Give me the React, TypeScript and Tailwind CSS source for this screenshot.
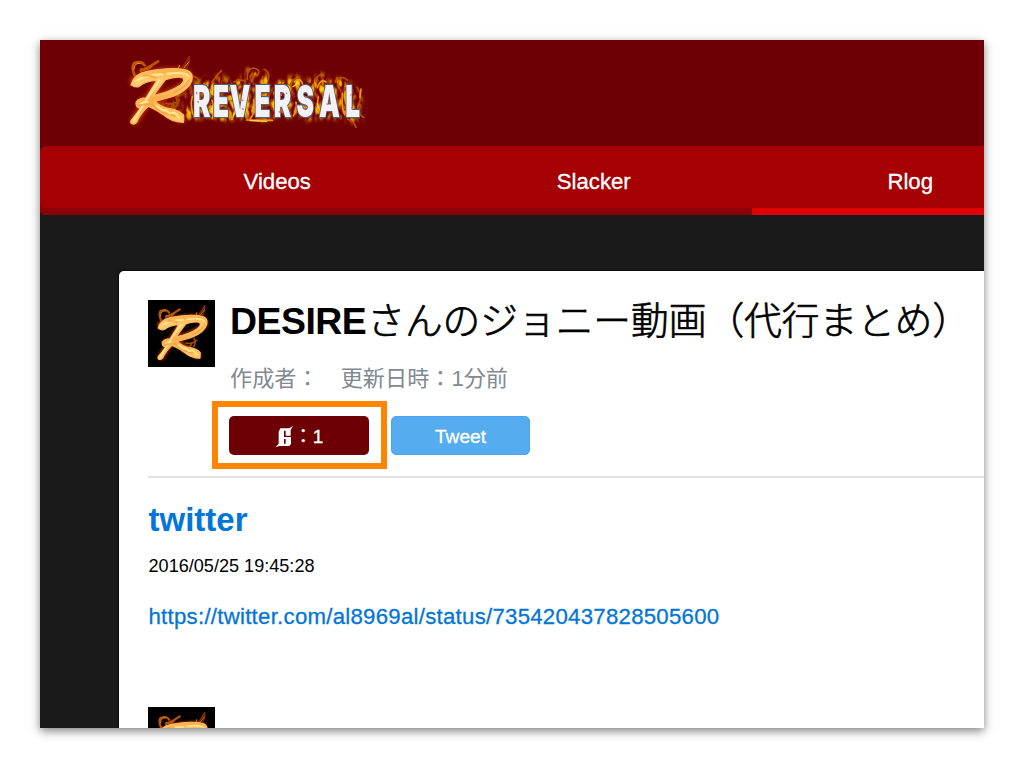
import React from 'react';

function Emblem({ id }: { id: string }) {
  return (
    <g strokeLinecap="round" strokeLinejoin="round" fill="none">
      <defs>
        <linearGradient id={`${id}-fire`} x1="0" y1="80" x2="0" y2="255" gradientUnits="userSpaceOnUse">
          <stop offset="0" stopColor="#ffa93a" />
          <stop offset="0.25" stopColor="#ffcf70" />
          <stop offset="0.55" stopColor="#ffad48" />
          <stop offset="1" stopColor="#ffcf70" />
        </linearGradient>
        <filter id={`${id}-glow`} x="-30%" y="-30%" width="160%" height="160%">
          <feGaussianBlur stdDeviation="6" />
        </filter>
        <filter id={`${id}-soft`} x="-20%" y="-20%" width="140%" height="140%">
          <feGaussianBlur stdDeviation="2" />
        </filter>
      </defs>
      <g filter={`url(#${id}-glow)`} stroke="#e04800" opacity="0.85">
        <path d="M72 122Q120 94 180 96Q242 92 236 120Q222 152 95 187" strokeWidth="24" />
        <path d="M155 112L74 242M128 188L212 236" strokeWidth="24" />
      </g>
      <g filter={`url(#${id}-soft)`}>
        <path d="M76 110Q62 82 72 70Q94 60 104 76M92 92Q120 82 144 64M94 88Q112 92 124 78" stroke="#bd5504" strokeWidth="8" />
        <path d="M172 92Q190 72 184 96M212 88Q230 66 238 50Q240 76 222 96" stroke="#8d2b02" strokeWidth="5" />
        <path d="M72 88Q72 68 90 70M208 76L204 92M222 84L236 66" stroke="#ff9918" strokeWidth="3" />
        <path d="M150 212Q150 228 168 220M168 190Q190 196 208 180M174 214L190 192M198 172Q206 190 196 204" stroke="#a94a05" strokeWidth="6" />
      </g>
      <path
        d="M63 134Q72 101 112 94Q195 79 231 91Q250 98 246 119Q238 150 188 169L134 184Q157 205 183 207Q207 211 221 226L220 247Q184 247 155 220Q132 205 115 199Q92 219 80 246Q72 256 63 249Q60 242 70 233L93 204Q77 205 78 187Q87 174 108 174L141 121Q105 123 88 139Q75 144 63 134ZM166 119L130 167Q180 157 209 137Q230 120 216 112Q192 109 166 119Z"
        fill={`url(#${id}-fire)`}
        fillRule="evenodd"
        stroke="#ffba68"
        strokeWidth="4"
      />
      <g filter={`url(#${id}-soft)`}>
        <path d="M80 121Q120 102 158 104M172 101Q228 94 235 109M147 122L108 181L72 240M92 190Q104 184 114 188" stroke="#ffe89a" strokeWidth="6" />
        <path d="M101 108Q124 104 136 114M87 198Q113 188 127 194Q155 225 205 229M192 156Q226 144 238 120" stroke="#f7a040" strokeWidth="6" opacity="0.8" />
        <path d="M140 197L157 211L168 210L179 221L192 217L207 233" stroke="#ffec90" strokeWidth="6" />
      </g>
    </g>
  );
}

function Logo() {
  return (
    <svg className="block h-[110px] w-[270px]" viewBox="0 0 810 330">
      <defs>
        <filter id="flame" x="-10%" y="-30%" width="120%" height="160%">
          <feGaussianBlur stdDeviation="1.8" />
        </filter>
        <filter id="blaze" x="-5%" y="-20%" width="110%" height="140%" colorInterpolationFilters="sRGB">
          <feGaussianBlur in="SourceAlpha" stdDeviation="8" result="shape" />
          <feTurbulence type="turbulence" baseFrequency="0.04 0.022" numOctaves="2" seed="12" />
          <feColorMatrix values="0.6 0 0 0 0.68  1.5 0 0 0 0.02  0 0 0 0 0.02  2.8 0 0 0 -0.2" />
          <feComposite in2="shape" operator="in" />
        </filter>
        <filter id="soften" x="-5%" y="-10%" width="110%" height="120%">
          <feGaussianBlur stdDeviation="1.2" />
        </filter>
      </defs>
      <path
        d="M155 200L190 165L230 160L248 122L262 132L280 106L300 122L330 96L348 119L385 114L412 82L440 94L468 88L485 119L515 122L555 104L580 126L610 114L632 98L655 116L695 112L740 144L756 185L745 215L757 236L740 252L700 238L645 233L600 242L545 230L450 244L390 234L340 245L290 234L220 241L180 231Z"
        opacity="0.9"
        filter="url(#blaze)"
      />
      <g filter="url(#flame)" fill="none" strokeLinecap="round" strokeLinejoin="round">
        <path
          d="M268 128Q262 108 250 110M306 126Q318 108 334 92M372 126Q392 116 404 124M412 118Q410 86 430 84Q452 88 444 104Q432 114 426 102M474 120Q482 96 462 88M540 136Q548 112 566 116M618 126Q622 98 640 106M676 124Q696 104 712 120M742 142Q760 170 744 198Q748 230 762 232M714 238Q734 246 738 262"
          stroke="#b5500a"
          strokeWidth="5"
        />
        <path
          d="M247 170Q239 199 252 231M306 180Q318 208 306 236M372 196Q380 212 366 238M431 180Q440 210 420 238M554 125Q574 108 579 138M558 187Q562 210 550 228M622 143Q632 114 648 126M625 172Q618 200 630 227M697 160Q695 205 704 224M753 147L750 173M410 240L488 241"
          stroke="#f0930f"
          strokeWidth="5"
        />
        <path d="M310 194L306 218M375 210L370 228M549 140L562 130M622 190L626 205M420 242L470 244" stroke="#ffd54e" strokeWidth="4" />
      </g>
      <Emblem id="brand" />
      <g filter="url(#soften)">
        <text
          transform="scale(.6 1)"
          x="415 515 597 723 819 933 1045 1176"
          y="232"
          fontFamily="Inter, 'Liberation Sans', sans-serif"
          fontWeight="900"
          fontSize="131"
          fill="#f3f1f5"
          stroke="#56606c"
          strokeWidth="8"
          paintOrder="stroke"
        >
          REVERSAL
        </text>
      </g>
      <path d="M260 155v8M262 184l5 3M280 158v5M392 178l8 4M396 205l5 5M510 164l6 2M508 213v5M530 158v4M585 170l4 4M650 190l3 5M723 163v4M724 202l4 4" stroke="#e07c70" strokeWidth="4" />
    </svg>
  );
}

function Avatar({ id }: { id: string }) {
  return (
    <svg className="block size-[67px] shrink-0 bg-black" viewBox="0 0 201 201">
      <g transform="translate(-20 -23) scale(.8)">
        <Emblem id={id} />
      </g>
    </svg>
  );
}

function GoodIcon() {
  return (
    <svg className="h-[22px] w-[19px]" viewBox="0 0 57 66" fill="#fff">
      <path d="M3 62L11 53V17L16 7H43L54 0L47 12V29H32V14H27V53H32V39H27V33H48V54L43 60H13L1 64Z" />
    </svg>
  );
}

export default function App() {
  return (
    <div className="h-[768px] w-[1024px] overflow-hidden bg-white p-10 font-['Liberation_Sans','Noto_Sans_CJK_JP',sans-serif] text-black">
      <main className="h-[688px] w-[944px] bg-[#1a1a1a] shadow-[0_3px_9px_rgba(0,0,0,0.5)]">
        <div className="flex h-full flex-col overflow-hidden">
          <header className="h-[106px] shrink-0 bg-[#6d0004] pl-[70px]">
            <Logo />
          </header>
          <nav className="flex h-[69px] shrink-0 overflow-hidden rounded-l-[5px] bg-[#a50003] pl-[79px] text-[22.2px] leading-[71px] text-white shadow-[inset_0_-7px_0_#8b0002] [-webkit-text-stroke:0.3px_white]">
            <a className="w-[316.5px] shrink-0 text-center">Videos</a>
            <a className="w-[316.5px] shrink-0 text-center">Slacker</a>
            <a className="w-[316.5px] shrink-0 border-b-[7px] border-[#df0004] text-center">Rlog</a>
          </nav>
          <section className="mt-14 ml-[79px] flex-1 overflow-hidden rounded-tl-[5px] bg-white pt-[29px] pl-[29px] shadow-[0_0_3px_#000]">
            <div className="flex h-[178px] border-b-2 border-[#e3e4e5]">
              <Avatar id="author" />
              <div className="pl-[15px]">
                <h1 className="h-[63px] text-[37.4px] leading-[35px] whitespace-nowrap">
                  <span className="font-bold tracking-[-0.5px]">DESIRE</span>
                  <span className="pl-px font-['Noto_Sans_CJK_JP',sans-serif] text-[37.7px] font-light [-webkit-text-stroke:0.7px_black]">さんのジョニー動画（代行まとめ）</span>
                </h1>
                <p className="h-[38px] text-[22.15px] leading-8 whitespace-nowrap text-[#818a91]">作成者：　更新日時：1分前</p>
                <div className="-ml-[18px] flex items-center">
                  <div className="border-[6px] border-[#ff8500] py-[8.5px] pr-3 pl-[11px]">
                    <button className="flex h-[39px] w-[140px] items-center justify-center rounded-[5px] bg-[#6d0004] pt-[3px] text-[19px] text-white">
                      <GoodIcon />
                      <span className="pt-px [-webkit-text-stroke:0.3px_white]">：1</span>
                    </button>
                  </div>
                  <button className="ml-1 h-[39px] w-[139px] rounded-[5px] border border-[#4aa5ec] bg-[#55acee] pt-1 text-[19.2px] text-white [-webkit-text-stroke:0.3px_white]">Tweet</button>
                </div>
              </div>
            </div>
            <div className="pl-[0.5px]">
              <h2 className="mt-[22px] text-[33px] leading-10 font-bold text-[#0275d8]">twitter</h2>
              <p className="mt-[14px] text-[18.1px] leading-6">2016/05/25 19:45:28</p>
              <a className="mt-[23px] block text-[22.2px] leading-8 tracking-[0.27px] text-[#0275d8] [-webkit-text-stroke:0.3px_#0275d8]">https://twitter.com/al8969al/status/735420437828505600</a>
            </div>
            <div className="mt-[74px]">
              <Avatar id="reply" />
            </div>
          </section>
        </div>
      </main>
    </div>
  );
}
